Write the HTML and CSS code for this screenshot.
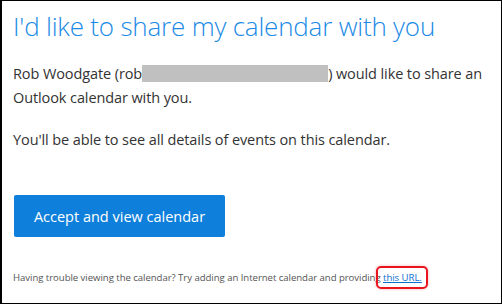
FILE: index.html
```html
<!DOCTYPE html>
<html lang="en">
<head>
    <meta charset="UTF-8">
    <title>Share calendar</title>
    <link rel="stylesheet" href="styles.css">
</head>
<body>
    <div class="invite">
        <h1 class="invite-title">I'd like to share my calendar with you</h1>
        <p class="invite-text">Rob Woodgate (rob<span class="redacted"></span>) would like to share an Outlook calendar with you.</p>
        <p class="invite-text">You'll be able to see all details of events on this calendar.</p>
        <a class="accept-btn" href="#">Accept and view calendar</a>
        <p class="invite-note">Having trouble viewing the calendar? Try adding an Internet calendar and providing <a class="note-link" href="#">this URL.</a></p>
    </div>
</body>
</html>
```

FILE: styles.css
```css
/* --- Page frame --- */
html, body {
    margin: 0;
    height: 100%;
}

body {
    background-color: #fff;
    font-family: 'Open Sans', 'Noto Sans', sans-serif;
}

.invite {
    box-sizing: border-box;
    height: 100%;
    border: 1px solid #000;
    border-left-width: 2px;
    padding: 7px 12px 0 11px;
    display: flex;
    flex-direction: column;
    align-items: flex-start;
}

/* --- Heading --- */
.invite-title {
    margin: 0;
    font-size: 26px;
    font-weight: 300;
    line-height: 36px;
    color: #1b8ae6;
    letter-spacing: -0.2px;
}

/* --- Body copy --- */
.invite-text {
    margin: 18px 0 0;
    font-size: 14.5px;
    line-height: 24px;
    color: #333;
    letter-spacing: -0.1px;
}

.invite-text + .invite-text {
    margin-top: 18px;
}

.redacted {
    display: inline-block;
    width: 186px;
    height: 17px;
    vertical-align: -3px;
    background-color: #c0c0c0;
}

/* --- Button --- */
.accept-btn {
    margin: 43px 0 0 1px;
    width: 211px;
    height: 42px;
    display: flex;
    align-items: center;
    justify-content: center;
    background-color: #0e7fda;
    color: #fff;
    font-size: 14.5px;
    text-decoration: none;
    border-radius: 2px;
}

/* --- Footer note --- */
.invite-note {
    margin: 33px 0 0;
    font-size: 9.6px;
    line-height: 16px;
    color: #555;
    letter-spacing: -0.05px;
}

.note-link {
    position: relative;
    color: #0e6fcf;
}

/* red highlight around the link */
.note-link::after {
    content: '';
    position: absolute;
    left: -7px;
    right: -6px;
    top: -5px;
    bottom: -5px;
    border: 2px solid #e8141e;
    border-radius: 5px;
    box-shadow: 0 0 3px rgba(232, 20, 30, 0.35);
}
```
